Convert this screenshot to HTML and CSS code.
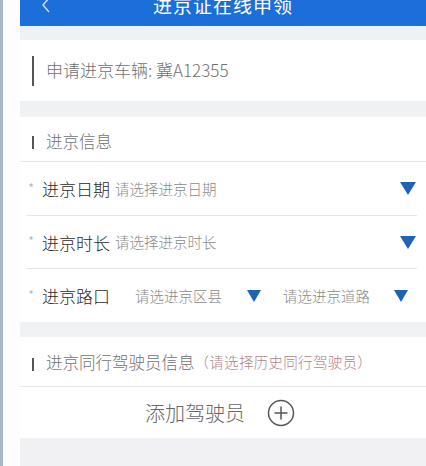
FILE: index.html
```html
<!DOCTYPE html>
<html lang="zh">
<head>
<meta charset="utf-8">
<title>进京证在线申领</title>
<link rel="stylesheet" href="styles.css">
</head>
<body>
<div class="frame">
  <div class="edge"></div>
  <div class="gutter"></div>
  <main class="app">
    <header class="topbar">
      <svg class="back" width="10" height="14" viewBox="0 0 10 14"><path d="M8 -2 L2 5 L8 12" fill="none" stroke="#cfe0f7" stroke-width="1.4"/></svg>
      <div class="title">进京证在线申领</div>
    </header>
    <div class="band band-a"></div>
    <section class="card vehicle">
      <span class="bar tall"></span>
      <span class="vehicle-text">申请进京车辆: 冀A12355</span>
    </section>
    <div class="band band-b"></div>
    <section class="card">
      <div class="heading h1">
        <span class="bar"></span>
        <span class="heading-text">进京信息</span>
      </div>
      <div class="rows">
        <div class="row">
          <span class="star">*</span>
          <span class="label">进京日期</span>
          <span class="ph">请选择进京日期</span>
          <span class="tri push"></span>
        </div>
        <div class="row">
          <span class="star">*</span>
          <span class="label">进京时长</span>
          <span class="ph">请选择进京时长</span>
          <span class="tri push"></span>
        </div>
        <div class="row last">
          <span class="star">*</span>
          <span class="label">进京路口</span>
          <span class="ph ph-a">请选进京区县</span>
          <span class="tri tri-a"></span>
          <span class="ph ph-b">请选进京道路</span>
          <span class="tri tri-b"></span>
        </div>
      </div>
    </section>
    <div class="band band-c"></div>
    <section class="card">
      <div class="heading h2">
        <span class="bar"></span>
        <span class="heading-text">进京同行驾驶员信息</span><span class="hint">（请选择历史同行驾驶员）</span>
      </div>
      <div class="add">
        <span class="add-text">添加驾驶员</span>
        <svg class="plus" width="28" height="28" viewBox="0 0 28 28"><circle cx="14" cy="14" r="12.5" fill="none" stroke="#555" stroke-width="1.5"/><path d="M14 7.5 V20.5 M7.5 14 H20.5" stroke="#555" stroke-width="1.5"/></svg>
      </div>
    </section>
    <div class="band band-d"></div>
  </main>
</div>
</body>
</html>
```
FILE: styles.css
```css
html, body {
  margin: 0;
  padding: 0;
  background: #fff;
}
body {
  width: 426px;
  height: 466px;
  overflow: hidden;
  font-family: "Noto Sans CJK SC", "Noto Sans", sans-serif;
  font-weight: 300;
}
.frame {
  display: flex;
  height: 466px;
}
.edge {
  width: 3px;
  background: #a9b8c6;
  flex: none;
}
.gutter {
  width: 17px;
  background: #fdfdfe;
  flex: none;
}
.app {
  width: 406px;
  flex: none;
  display: flex;
  flex-direction: column;
}
.topbar {
  height: 26px;
  background: #1c6fd8;
  display: flex;
  align-items: flex-start;
  overflow: hidden;
  box-shadow: inset 0 -1px 0 #2a6cc4;
}
.back {
  margin-left: 21px;
  flex: none;
}
.title {
  flex: 1;
  text-align: center;
  color: #fff;
  font-size: 19px;
  font-weight: 400;
  line-height: 10px;
  margin-left: -31px;
  letter-spacing: 1px;
}
.band {
  background: linear-gradient(#eef1f3, #f2f2f4);
  flex: none;
}
.band-a { height: 14px; background: linear-gradient(#e9f2f6, #f0f1f3); }
.band-b { height: 16px; }
.band-c { height: 15px; }
.band-d { flex: 1; background: #f1f1f3; }
.card {
  background: #fff;
  display: flex;
  flex-direction: column;
}
.vehicle {
  height: 61px;
  flex-direction: row;
  align-items: center;
  padding-left: 12px;
}
.bar {
  width: 2px;
  height: 13px;
  background: #555;
  flex: none;
}
.bar.tall {
  height: 30px;
}
.vehicle-text {
  margin-left: 12px;
  font-size: 17px;
  line-height: 1;
  color: #707070;
  margin-top: -2px;
}
.heading {
  display: flex;
  align-items: center;
  padding-left: 12px;
  border-bottom: 1px solid #e8e8e8;
  box-sizing: border-box;
}
.h1 {
  height: 45px;
  padding-top: 7px;
}
.h2 {
  height: 50px;
  padding-top: 5px;
}
.heading-text {
  margin-left: 12px;
  font-size: 16.5px;
  line-height: 1;
  color: #727272;
  margin-top: -3px;
}
.hint {
  font-size: 14.5px;
  line-height: 1;
  color: #b0848a;
  margin-top: -3px;
  letter-spacing: 0.3px;
}
.rows {
  margin-left: 7px;
  margin-right: 9px;
}
.row {
  height: 53px;
  display: flex;
  align-items: center;
  border-bottom: 1px solid #e6e6e6;
  box-sizing: border-box;
}
.row:first-child {
  height: 54px;
}
.row.last {
  border-bottom: none;
}
.star {
  width: 15px;
  padding-left: 1px;
  box-sizing: border-box;
  font-size: 14px;
  color: #b0b0b0;
  line-height: 1;
  margin-top: -2px;
}
.label {
  font-size: 17px;
  font-weight: 300;
  line-height: 1;
  color: #2a2a2a;
}
.ph {
  margin-left: 5px;
  font-size: 14.5px;
  line-height: 1;
  color: #8a8a8a;
  margin-top: 1px;
}
.ph-a {
  margin-left: 25px;
}
.ph-b {
  margin-left: 22px;
}
.tri {
  width: 0;
  height: 0;
  border-left: 8px solid transparent;
  border-right: 8px solid transparent;
  border-top: 13px solid #1f63b5;
  flex: none;
}
.push {
  margin-left: auto;
  margin-right: 1px;
}
.tri-a {
  margin-left: 25px;
  border-left-width: 7px;
  border-right-width: 7px;
  border-top-width: 12px;
}
.tri-b {
  margin-left: 24px;
  border-left-width: 7px;
  border-right-width: 7px;
  border-top-width: 12px;
}
.add {
  height: 51px;
  display: flex;
  align-items: center;
  justify-content: center;
  padding-right: 6px;
}
.add-text {
  font-size: 20px;
  line-height: 1;
  color: #666;
}
.plus {
  margin-left: 22px;
  flex: none;
}
```
